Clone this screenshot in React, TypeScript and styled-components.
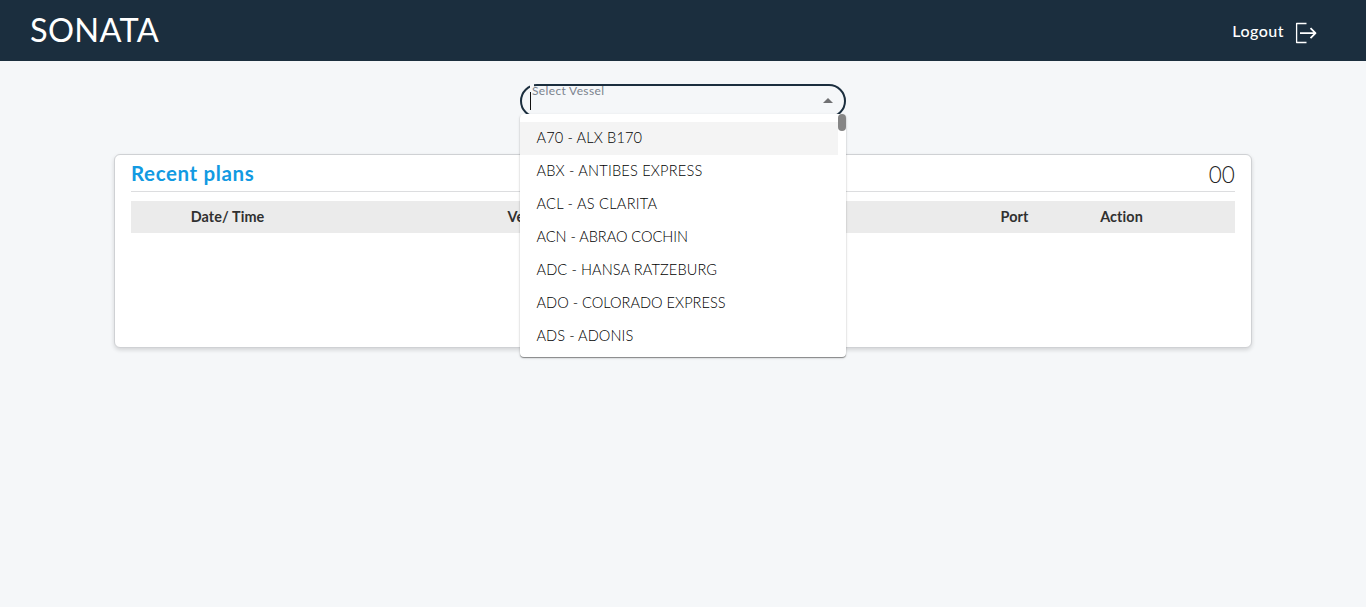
import React from 'react';
import styled, { createGlobalStyle } from 'styled-components';

const GlobalStyle = createGlobalStyle`
  * { box-sizing: border-box; }
  body {
    margin: 0;
    background: #f5f7f9;
    font-family: Lato, 'Liberation Sans', sans-serif;
    overflow: hidden;
  }
`;

const Page = styled.div`
  min-height: 607px;
  background: #f5f7f9;
`;

const Header = styled.header`
  height: 61px;
  padding: 0 49px 0 30px;
  display: flex;
  align-items: center;
  justify-content: space-between;
  background: #1b2e3e;
  color: #fff;
`;

const Brand = styled.div`
  margin-top: -1px;
  font-size: 32.5px;
  line-height: 40px;
  letter-spacing: 0.35px;
`;

const LogoutButton = styled.div`
  display: flex;
  align-items: center;
  gap: 11px;
  font-size: 16px;
  line-height: 20px;
  font-weight: 500;
  letter-spacing: 0.5px;
  svg { display: block; margin-top: 4px; }
`;

const Main = styled.main`
  padding: 23px 114px 0;
`;

const SelectField = styled.div`
  position: relative;
  z-index: 2;
  width: 326px;
  height: 34px;
  margin: 0 auto;
`;

const SelectBox = styled.div`
  height: 34px;
  border: 2px solid #1b2e3e;
  border-radius: 17px;
  display: flex;
  align-items: center;
  justify-content: space-between;
  padding: 0 11px 0 8px;
`;

const Caret = styled.div`
  width: 1px;
  height: 18px;
  background: #111;
`;

const Triangle = styled.div`
  margin-top: -2px;
  border: 5px solid transparent;
  border-top: 0;
  border-bottom-color: #707173;
`;

const Label = styled.label`
  position: absolute;
  left: 12px;
  top: 0;
  font-size: 12px;
  line-height: 14px;
  letter-spacing: 0.35px;
  color: #7b838d;
`;

const Notch = styled.div`
  position: absolute;
  left: 10px;
  top: 0;
  width: 4px;
  height: 4px;
  background: #f5f7f9;
`;

const Menu = styled.div`
  position: absolute;
  left: 0;
  top: 30px;
  width: 326px;
  height: 243px;
  padding: 8px 0;
  display: flex;
  align-items: flex-start;
  background: #fff;
  border-radius: 4px;
  box-shadow: 0 1px 1px rgba(0, 0, 0, 0.4), 0 1px 3px rgba(0, 0, 0, 0.14);
`;

const Options = styled.ul`
  flex: 1;
  margin: 0;
  padding: 0;
  list-style: none;
`;

const Option = styled.li<{ $active?: boolean; $tracking: number }>`
  height: 33px;
  padding-left: 16.5px;
  line-height: 32px;
  font-size: 14.6px;
  font-weight: 300;
  letter-spacing: ${(p) => p.$tracking}px;
  white-space: nowrap;
  color: #000;
  background: ${(p) => (p.$active ? '#f4f4f4' : 'transparent')};
`;

const ScrollThumb = styled.div`
  width: 8px;
  height: 17px;
  margin-top: -8px;
  border-radius: 4px;
  background: #858585;
`;

const Card = styled.section`
  height: 194px;
  margin-top: 36px;
  padding: 0 16px;
  background: #fff;
  border: 1px solid #cfd1d4;
  border-radius: 6px;
  box-shadow: 0 2px 4px rgba(0, 0, 0, 0.14);
`;

const CardHeader = styled.div`
  height: 37px;
  display: flex;
  justify-content: space-between;
  border-bottom: 1px solid #dcdddf;
`;

const Title = styled.h2`
  margin: 0;
  font-size: 20.5px;
  line-height: 37px;
  font-weight: 700;
  letter-spacing: 0.62px;
  color: #129ae2;
`;

const Count = styled.div`
  font-size: 22.5px;
  line-height: 40px;
  font-weight: 300;
  letter-spacing: 0.1px;
  color: #222;
`;

const HeadRow = styled.div`
  display: grid;
  grid-template-columns: 193px 408px 219px 127px 87px 70px;
  height: 32px;
  margin-top: 9px;
  background: #ebebeb;
  color: #303030;
  font-size: 14.4px;
  line-height: 31px;
  font-weight: 700;
  text-align: center;
`;

const HeadCell = styled.div`
  letter-spacing: 0.1px;
`;

const vessels = [
  { name: 'A70 - ALX B170', tracking: 0.12 },
  { name: 'ABX - ANTIBES EXPRESS', tracking: 0.2 },
  { name: 'ACL - AS CLARITA', tracking: 0.25 },
  { name: 'ACN - ABRAO COCHIN', tracking: -0.06 },
  { name: 'ADC - HANSA RATZEBURG', tracking: 0.1 },
  { name: 'ADO - COLORADO EXPRESS', tracking: 0 },
  { name: 'ADS - ADONIS', tracking: 0.05 },
];

export default function App() {
  return (
    <Page>
      <GlobalStyle />
      <Header>
        <Brand>SONATA</Brand>
        <LogoutButton>
          <span>Logout</span>
          <svg width="22" height="22" viewBox="0 0 22 22" fill="none" stroke="#fff" strokeLinejoin="round">
            <path strokeWidth="1.3" d="M11.5 1.5H1.6V20.5H11.5" />
            <path strokeWidth="1.8" d="M5 11.2H20.3M15.5 6.2L20.5 11.2L15.5 16.2" />
          </svg>
        </LogoutButton>
      </Header>
      <Main>
        <SelectField>
          <SelectBox>
            <Caret />
            <Triangle />
          </SelectBox>
          <Notch />
          <Label>Select Vessel</Label>
          <Menu>
            <Options>
              {vessels.map((v, i) => (
                <Option key={v.name} $active={i === 0} $tracking={v.tracking}>
                  {v.name}
                </Option>
              ))}
            </Options>
            <ScrollThumb />
          </Menu>
        </SelectField>
        <Card>
          <CardHeader>
            <Title>Recent plans</Title>
            <Count>00</Count>
          </CardHeader>
          <HeadRow>
            <HeadCell>Date/ Time</HeadCell>
            <HeadCell>Vessel</HeadCell>
            <HeadCell />
            <HeadCell>Port</HeadCell>
            <HeadCell>Action</HeadCell>
            <HeadCell />
          </HeadRow>
        </Card>
      </Main>
    </Page>
  );
}
